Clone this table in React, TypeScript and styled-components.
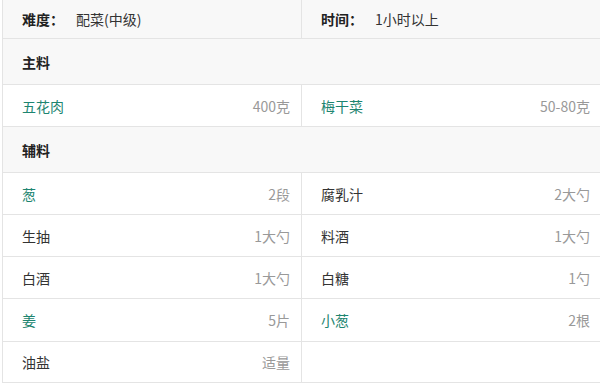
import styled, { createGlobalStyle } from "styled-components";

const GlobalStyle = createGlobalStyle`
  body {
    margin: 0;
    background: #fff;
    font-family: "Noto Sans CJK SC", "Liberation Sans", sans-serif;
    font-size: 14px;
    color: #333;
  }
`;

const Table = styled.div`
  margin-left: 2px;
  border-left: 1px solid #e4e4e4;
  width: 598px;
  overflow: hidden;
`;

const Row = styled.div<{ $h: number; $gray?: boolean }>`
  display: grid;
  grid-template-columns: 299px 1fr;
  height: ${(p) => p.$h}px;
  background: ${(p) => (p.$gray ? "#f8f8f8" : "#fff")};
  border-bottom: 1px solid #e4e4e4;
`;

const Cell = styled.div<{ $divider?: boolean }>`
  display: flex;
  align-items: center;
  justify-content: space-between;
  padding: 0 11px 0 19px;
  border-right: ${(p) => (p.$divider ? "1px solid #e4e4e4" : "none")};
  white-space: nowrap;
`;

const SectionTitle = styled.div`
  grid-column: 1 / -1;
  display: flex;
  align-items: center;
  padding-left: 19px;
  font-weight: bold;
  color: #222;
`;

const InfoLabel = styled.span`
  font-weight: bold;
  color: #222;
  width: 54px;
`;

const InfoValue = styled.span`
  color: #333;
  flex: 1;
`;

const Name = styled.span<{ $link?: boolean }>`
  color: ${(p) => (p.$link ? "#1d8570" : "#333")};
`;

const Amount = styled.span`
  color: #999;
`;

type Item = { name: string; amount: string; link?: boolean };

const main: Item[][] = [
  [
    { name: "五花肉", amount: "400克", link: true },
    { name: "梅干菜", amount: "50-80克", link: true },
  ],
];

const extra: Item[][] = [
  [
    { name: "葱", amount: "2段", link: true },
    { name: "腐乳汁", amount: "2大勺" },
  ],
  [
    { name: "生抽", amount: "1大勺" },
    { name: "料酒", amount: "1大勺" },
  ],
  [
    { name: "白酒", amount: "1大勺" },
    { name: "白糖", amount: "1勺" },
  ],
  [
    { name: "姜", amount: "5片", link: true },
    { name: "小葱", amount: "2根", link: true },
  ],
  [{ name: "油盐", amount: "适量" }],
];

const extraHeights = [41, 41, 41, 42, 40];

const ItemRow = ({ items, h }: { items: Item[]; h: number }) => (
  <Row $h={h}>
    {[0, 1].map((i) => {
      const it = items[i];
      return (
        <Cell key={i} $divider={i === 0}>
          {it && (
            <>
              <Name $link={it.link}>{it.name}</Name>
              <Amount>{it.amount}</Amount>
            </>
          )}
        </Cell>
      );
    })}
  </Row>
);

export default function App() {
  return (
    <>
      <GlobalStyle />
      <Table>
        <Row $h={38} $gray>
          <Cell $divider>
            <InfoLabel>难度：</InfoLabel>
            <InfoValue>配菜(中级)</InfoValue>
          </Cell>
          <Cell>
            <InfoLabel>时间：</InfoLabel>
            <InfoValue>1小时以上</InfoValue>
          </Cell>
        </Row>
        <Row $h={45} $gray>
          <SectionTitle>主料</SectionTitle>
        </Row>
        {main.map((items, i) => (
          <ItemRow key={i} items={items} h={41} />
        ))}
        <Row $h={45} $gray>
          <SectionTitle>辅料</SectionTitle>
        </Row>
        {extra.map((items, i) => (
          <ItemRow key={i} items={items} h={extraHeights[i]} />
        ))}
      </Table>
    </>
  );
}
